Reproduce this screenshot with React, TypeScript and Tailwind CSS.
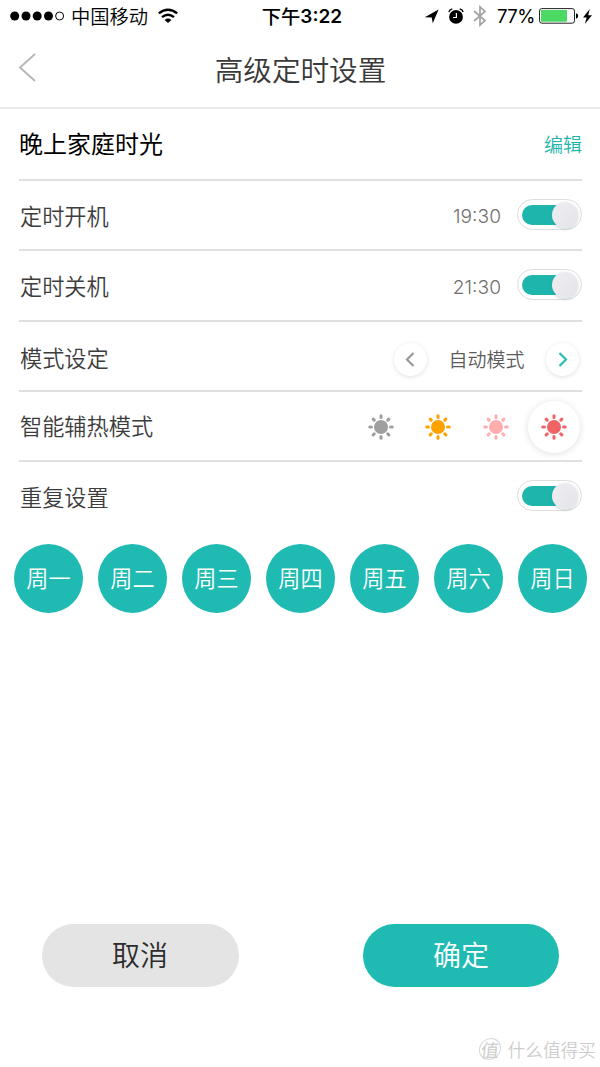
import { useState } from "react";
import type { ReactNode } from "react";

const days = ["周一", "周二", "周三", "周四", "周五", "周六", "周日"];

const StatusBar = () => (
  <div className="flex h-8 items-center text-black">
    <div className="flex w-[200px] items-center">
      <svg className="ml-[10px]" width="55" height="10" viewBox="0 0 55 10">
        <circle cx="4.7" cy="5" r="4.5" />
        <circle cx="16" cy="5" r="4.5" />
        <circle cx="27.2" cy="5" r="4.5" />
        <circle cx="38.5" cy="5" r="4.5" />
        <circle cx="49.6" cy="5" r="4" fill="none" stroke="#000" strokeWidth="1" />
      </svg>
      <span className="ml-[6px] text-[19.3px] leading-8 font-[350] whitespace-nowrap">中国移动</span>
      <svg className="ml-[10px]" width="20" height="16" viewBox="0 0 20 16" fill="none" stroke="#000">
        <path d="M.8 5.4Q10-2 19.2 5.4" strokeWidth="2.5" />
        <path d="M4 9.1Q10 4.2 16 9.1" strokeWidth="2.4" />
        <path d="M10 15L6.6 11.9Q10 9.2 13.4 11.9Z" fill="#000" stroke="none" />
      </svg>
    </div>
    <div className="flex w-[204px] items-center justify-center text-[19.3px] leading-8 font-medium">
      下午<span className="mt-px font-['Inter'] text-[19px] leading-8 font-semibold">3:22</span>
    </div>
    <div className="flex flex-1 items-center">
      <svg className="ml-[20px]" width="15" height="15" viewBox="0 0 15 15">
        <path d="M14.6 .6L8.8 14.2L7.7 8.6L.8 8.2Z" />
      </svg>
      <svg className="ml-[9px]" width="16" height="17" viewBox="0 0 16 17">
        <circle cx="8" cy="8.9" r="6.9" />
        <path d="M.8 4Q1.5 1.6 4.3 .9M15.2 4Q14.5 1.6 11.7 .9" fill="none" stroke="#000" strokeWidth="1.3" />
        <path d="M8.4 5v4.5H4.9" fill="none" stroke="#fff" strokeWidth="1.2" />
      </svg>
      <svg className="ml-[9px]" width="14" height="22" viewBox="0 0 14 22" fill="none" stroke="#a3a3a3" strokeWidth="1.7">
        <path d="M1 6L12 15.6L7 20V2L12 6.4L1 16" />
      </svg>
      <span className="ml-[10px] w-[38px] font-['Inter'] text-[18.5px] leading-8 tracking-[-0.5px]">77%</span>
      <svg className="ml-[4px]" width="40" height="16" viewBox="0 0 40 16">
        <rect x=".5" y=".6" width="35" height="14.6" rx="2.4" fill="#fff" stroke="#222" />
        <rect x="2" y="2.1" width="26" height="11.6" rx=".8" fill="#4cd964" />
        <path d="M37 5.3Q39.2 5.6 39.2 8T37 10.7Z" />
      </svg>
      <svg className="ml-[4px]" width="9" height="15" viewBox="0 0 9 15">
        <path d="M6.8 0L0 8.4H3.7L1.8 15L9 6.2H5.2Z" />
      </svg>
    </div>
  </div>
);

const Row = ({ label, children }: { label: string; children: ReactNode }) => (
  <div className="flex h-[70.3px] items-center justify-between border-b-2 border-[#e0e0e0] pl-px text-[22.2px] font-[350] text-[#3d3d3d]">
    <span>{label}</span>
    {children}
  </div>
);

const Toggle = () => {
  const [on, setOn] = useState(true);
  return (
    <button
      onClick={() => setOn(!on)}
      className="-mt-px flex h-[31px] w-[65px] items-center rounded-full border border-[#dedede] bg-white pl-1"
    >
      <span className={on ? "h-5 w-[43px] rounded-full bg-[#1db5ac]" : "h-5 w-[43px] rounded-full bg-gray-200"} />
      <span className="-ml-[13px] size-[26px] rounded-full bg-linear-to-br from-[#eeeef2] to-[#e3e3e9] shadow-[0_1px_3px_rgba(60,110,120,0.3)]" />
    </button>
  );
};

const Sun = ({ color }: { color: string }) => (
  <svg width="26" height="26" viewBox="0 0 26 26" fill={color} stroke={color} strokeWidth="3.1" strokeLinecap="round">
    <circle cx="13" cy="13" r="7" stroke="none" />
    <path d="M13 1.8v1.6M13 22.6v1.6M1.8 13h1.6M22.6 13h1.6M5.2 5.2l1 1M19.8 19.8l1 1M20.8 5.2l-1 1M6.2 19.8l-1 1" />
  </svg>
);

export default function App() {
  return (
    <div className="flex h-[1067px] w-[600px] flex-col overflow-hidden bg-white font-['Noto_Sans_CJK_SC',sans-serif]">
      <StatusBar />
      <header className="flex h-[77px] items-center border-b-2 border-[#e9e9e9]">
        <svg className="-mt-[6px] ml-[18px]" width="18" height="30" viewBox="0 0 18 30" fill="none" stroke="#b5b5b5" strokeWidth="1.8">
          <path d="M17 2L2 15.5L17 29" />
        </svg>
        <h1 className="mr-[35px] flex-1 text-center text-[28.6px] font-[350] text-[#3a3a3a]">高级定时设置</h1>
      </header>

      <main className="ml-[19px] w-[563px]">
        <div className="flex h-[72px] items-center justify-between border-b-2 border-[#e0e0e0]">
          <span className="-mt-[2px] text-[24px] text-black">晚上家庭时光</span>
          <button className="text-[19px] font-[350] text-[#1db5ac]">编辑</button>
        </div>
        <Row label="定时开机">
          <div className="flex items-center gap-4">
            <span className="mt-[2px] font-['Inter'] text-[19.2px] font-[350] text-[#707070]">19:30</span>
            <Toggle />
          </div>
        </Row>
        <Row label="定时关机">
          <div className="flex items-center gap-4">
            <span className="mt-[3px] font-['Inter'] text-[19.2px] font-[350] text-[#707070]">21:30</span>
            <Toggle />
          </div>
        </Row>
        <div className="flex h-[70.3px] items-center justify-between border-b-2 border-[#e0e0e0] pt-1 pl-px text-[22.2px] font-[350] text-[#3d3d3d]">
          <span>模式设定</span>
          <div className="mr-[3px] flex items-center pt-1">
            <button className="flex size-[33px] items-center justify-center rounded-full pr-[2px] shadow-[0_1px_4px_rgba(0,0,0,0.13)]">
              <svg width="10" height="15" viewBox="0 0 10 15" fill="none" stroke="#999" strokeWidth="2.2">
                <path d="M8.5 1L2 7.5L8.5 14" />
              </svg>
            </button>
            <span className="w-[119px] text-center text-[19px] text-[#5c5c5c]">自动模式</span>
            <button className="flex size-[33px] items-center justify-center rounded-full shadow-[0_1px_4px_rgba(0,0,0,0.13)]">
              <svg width="10" height="15" viewBox="0 0 10 15" fill="none" stroke="#29bdb5" strokeWidth="2.2">
                <path d="M1.5 1L8 7.5L1.5 14" />
              </svg>
            </button>
          </div>
        </div>
        <Row label="智能辅热模式">
          <div className="mr-[2.5px] flex items-center pt-[2px]">
            <Sun color="#9f9f9f" />
            <span className="ml-[31.7px] flex">
              <Sun color="#ffa200" />
            </span>
            <span className="ml-[31.7px] flex">
              <Sun color="#ffadad" />
            </span>
            <span className="ml-[18.5px] flex size-[52px] items-center justify-center rounded-full shadow-[0_1px_7px_rgba(0,0,0,0.13)]">
              <Sun color="#f06367" />
            </span>
          </div>
        </Row>
        <div className="flex h-[70px] items-center justify-between pb-[2px] pl-px text-[22.2px] font-[350] text-[#3d3d3d]">
          <span>重复设置</span>
          <Toggle />
        </div>
      </main>

      <div className="mt-[12px] ml-[14px] flex gap-[15px]">
        {days.map((day) => (
          <button key={day} className="size-[69px] shrink-0 rounded-full bg-[#1fbab2] pb-[3px] text-[22.2px] font-[350] text-white">
            {day}
          </button>
        ))}
      </div>

      <div className="mt-auto flex justify-between pr-[41px] pl-[42px]">
        <button className="h-[63px] w-[197px] rounded-full bg-[#e4e4e4] pr-px pb-[3px] text-[28px] font-[350] text-[#2c2c2c]">取消</button>
        <button className="h-[63px] w-[196px] rounded-full bg-[#1fbab2] pb-[3px] text-[28px] font-[350] text-white">确定</button>
      </div>

      <footer className="mt-[48px] mb-[4px] flex h-7 items-center justify-end pr-[4px] text-[#cdcdcd]">
        <span className="mr-[7px] flex size-[22px] -skew-x-6 items-center justify-center rounded-full border border-[#d8d8d8] text-[18px]">
          值
        </span>
        <span className="text-[17.7px] font-[350]">什么值得买</span>
      </footer>
    </div>
  );
}
